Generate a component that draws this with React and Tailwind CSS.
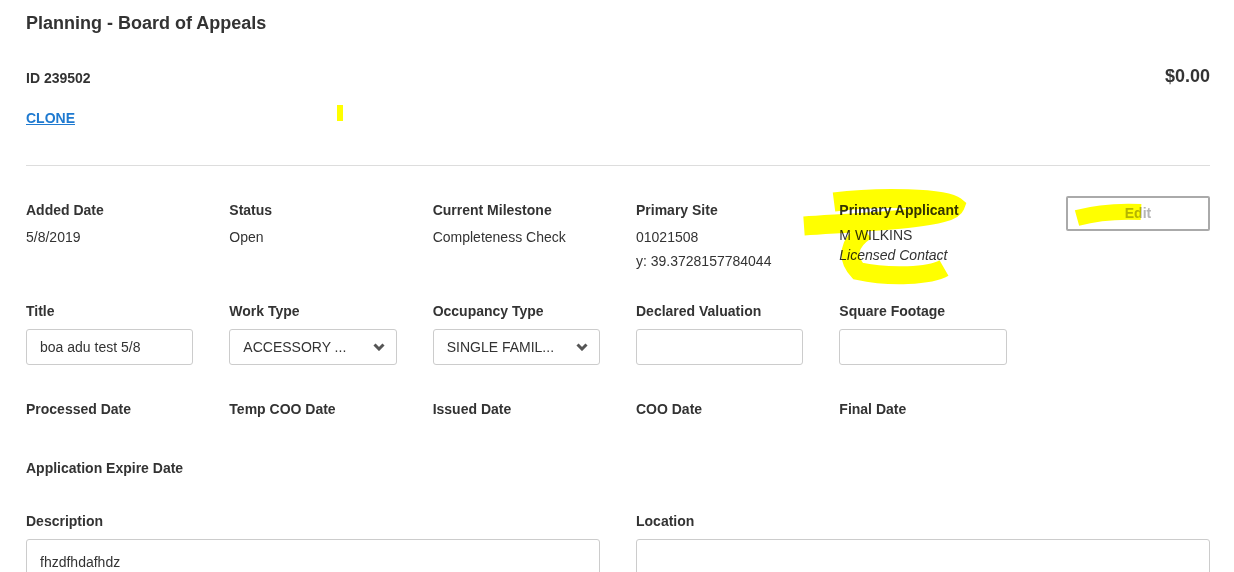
import React from "react";

const infoRow = [
  { label: "Added Date", lines: ["5/8/2019"] },
  { label: "Status", lines: ["Open"] },
  { label: "Current Milestone", lines: ["Completeness Check"] },
  { label: "Primary Site", lines: ["01021508", "y: 39.3728157784044"] },
];

const dateRow = ["Processed Date", "Temp COO Date", "Issued Date", "COO Date", "Final Date"];

function Label({ children }) {
  return <div className="text-[14px] leading-[16px] font-bold text-[#333]">{children}</div>;
}

function TextBox({ value }) {
  return (
    <div className="mt-[10px] h-[36px] border border-[#ccc] rounded-[3px] px-[13px] flex items-center text-[14px] text-[#333]">
      {value}
    </div>
  );
}

function Chevron() {
  return (
    <svg width="12" height="8" viewBox="0 0 12 8" className="text-[#555]">
      <polyline points="1.5,1.5 6,6 10.5,1.5" fill="none" stroke="currentColor" strokeWidth="3" />
    </svg>
  );
}

function SelectBox({ value }) {
  return (
    <div className="mt-[10px] h-[36px] border border-[#ccc] rounded-[3px] pl-[13px] pr-[11px] flex items-center justify-between text-[14px] text-[#333]">
      <span>{value}</span>
      <Chevron />
    </div>
  );
}

export default function App() {
  return (
    <div className="relative min-h-[572px] bg-white font-['Liberation_Sans',Arial,sans-serif] text-[#333]">
      <div className="ml-[26px] w-[1184px] pt-[13px] pb-10">
        <h1 className="text-[18px] leading-[20px] font-bold">Planning - Board of Appeals</h1>

        <div className="mt-[33px] flex justify-between items-start">
          <div className="mt-[4px] text-[14px] leading-[16px] font-bold">ID 239502</div>
          <div className="text-[18px] leading-[20px] font-bold">$0.00</div>
        </div>

        <a href="#" className="mt-[24px] block w-fit text-[14px] leading-[16px] font-bold text-[#1f7ad0] underline">
          CLONE
        </a>

        <div className="mt-[39px] border-t border-[#ddd]" />

        {/* summary */}
        <div className="mt-[30px] grid grid-cols-6 gap-x-[36px] items-start">
          {infoRow.map((item) => (
            <div key={item.label} className="pt-[6px]">
              <Label>{item.label}</Label>
              <div className="mt-[7px] text-[14px] leading-[24px]">
                {item.lines.map((l) => (
                  <div key={l}>{l}</div>
                ))}
              </div>
            </div>
          ))}
          <div className="pt-[6px]">
            <Label>Primary Applicant</Label>
            <div className="mt-[7px] text-[14px] leading-[20px]">
              <div>M WILKINS</div>
              <div className="italic">Licensed Contact</div>
            </div>
          </div>
          <div className="flex justify-end">
            <button className="w-[144px] h-[35px] border-2 border-[#aaa] rounded-[2px] text-[14px] font-bold text-[#b5b5b5]">
              Edit
            </button>
          </div>
        </div>

        {/* fields */}
        <div className="mt-[30px] grid grid-cols-6 gap-x-[36px]">
          <div>
            <Label>Title</Label>
            <TextBox value="boa adu test 5/8" />
          </div>
          <div>
            <Label>Work Type</Label>
            <SelectBox value="ACCESSORY ..." />
          </div>
          <div>
            <Label>Occupancy Type</Label>
            <SelectBox value="SINGLE FAMIL..." />
          </div>
          <div>
            <Label>Declared Valuation</Label>
            <TextBox value="" />
          </div>
          <div>
            <Label>Square Footage</Label>
            <TextBox value="" />
          </div>
        </div>

        <div className="mt-[36px] grid grid-cols-6 gap-x-[36px]">
          {dateRow.map((d) => (
            <Label key={d}>{d}</Label>
          ))}
        </div>

        <div className="mt-[43px]">
          <Label>Application Expire Date</Label>
        </div>

        <div className="mt-[37px] grid grid-cols-6 gap-x-[36px]">
          <div className="col-span-3">
            <Label>Description</Label>
            <div className="mt-[10px] h-[80px] border border-[#ccc] rounded-[3px] px-[13px] pt-[12px] text-[14px]">
              fhzdfhdafhdz
            </div>
          </div>
          <div className="col-span-3">
            <Label>Location</Label>
            <div className="mt-[10px] h-[80px] border border-[#ccc] rounded-[3px]" />
          </div>
        </div>
      </div>

      {/* yellow marker annotations */}
      <svg className="absolute left-0 top-0 pointer-events-none mix-blend-multiply" width="1234" height="572">
        <rect x="337" y="105" width="6" height="16" fill="#ffff00" />
        <path
          d="M834 202 C880 196 945 198 955 206 C950 219 860 222 804 226"
          fill="none"
          stroke="#ffff00"
          strokeWidth="19"
        />
        <path
          d="M866 231 C848 243 846 258 858 271 C890 278 930 276 944 268"
          fill="none"
          stroke="#ffff00"
          strokeWidth="18"
        />
        <path d="M1077 218 C1095 213 1120 211 1141 212" fill="none" stroke="#ffff00" strokeWidth="16" />
      </svg>
    </div>
  );
}
